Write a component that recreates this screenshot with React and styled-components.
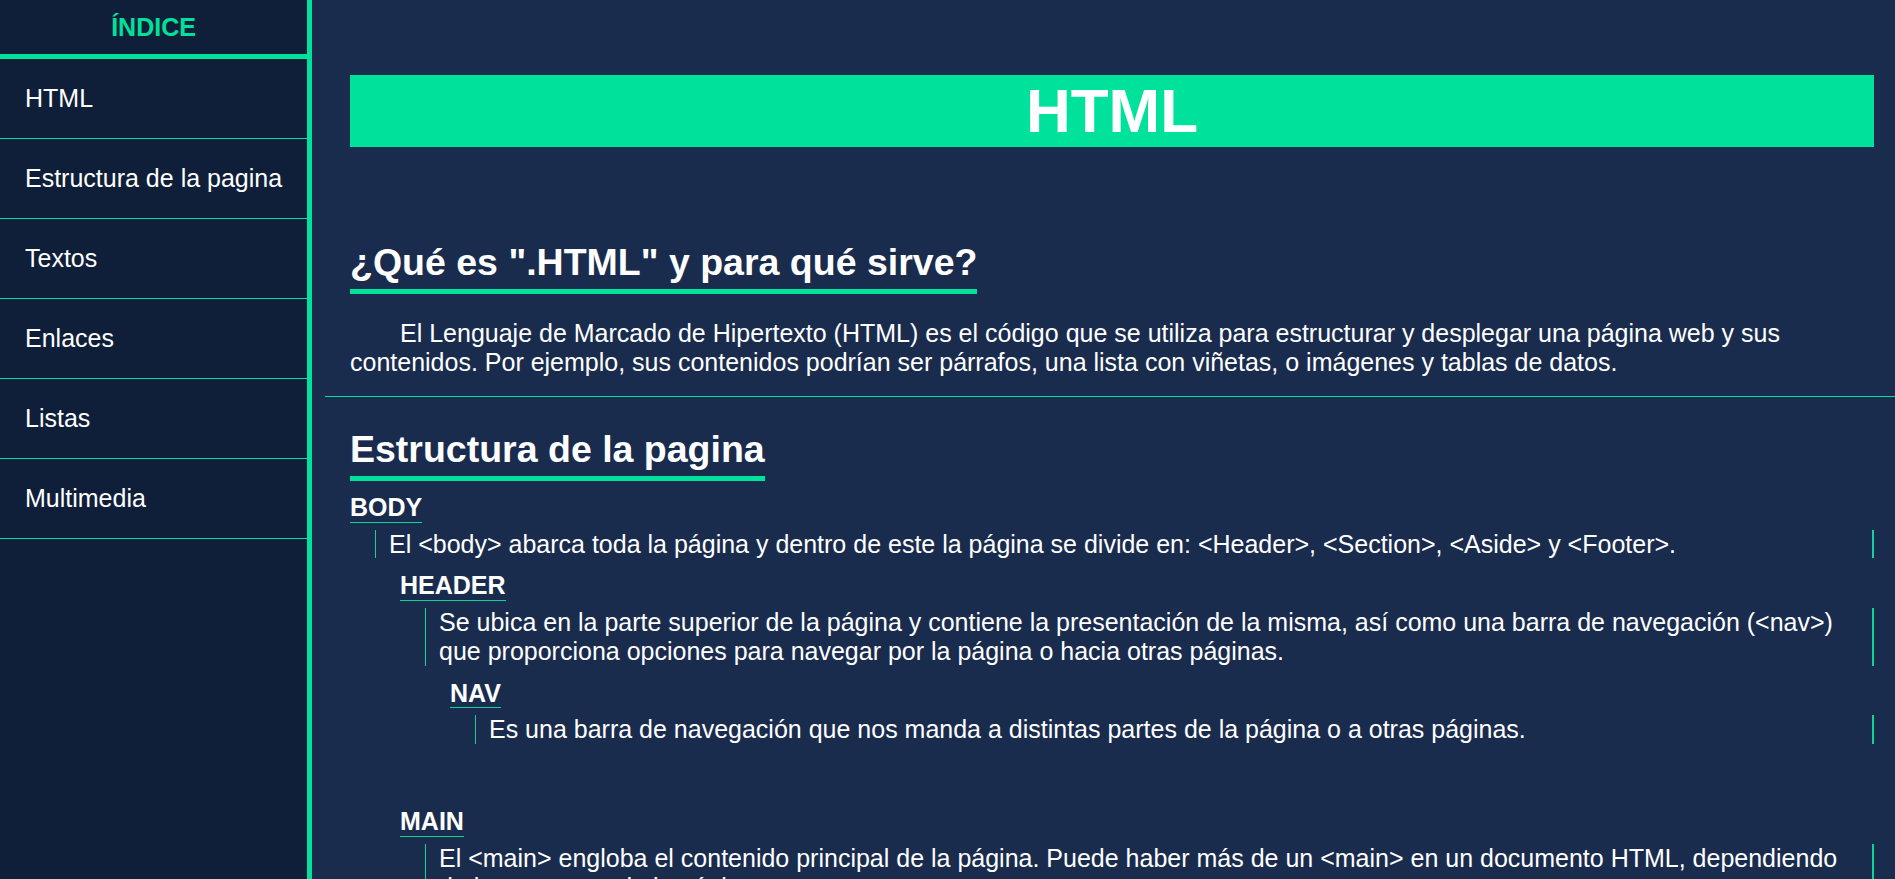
import React from 'react';
import styled, { createGlobalStyle } from 'styled-components';

const GlobalStyle = createGlobalStyle`
  html, body {
    margin: 0;
    padding: 0;
    height: 100%;
    overflow: hidden;
  }
  body {
    font-family: "Liberation Sans", Arial, sans-serif;
    color: #fff;
    background: #1a2c4e;
  }
  * {
    box-sizing: border-box;
  }
`;

const Layout = styled.div`
  display: flex;
  height: 100vh;
  overflow: hidden;
`;

const Sidebar = styled.aside`
  width: 312px;
  flex-shrink: 0;
  height: 100vh;
  background: #0f1f3a;
  border-right: 5px solid #00e29b;
`;

const SidebarTitle = styled.h2`
  margin: 0;
  height: 59px;
  display: flex;
  align-items: center;
  justify-content: center;
  font-size: 25px;
  font-weight: bold;
  color: #00e29b;
  border-bottom: 5px solid #00e29b;
`;

const Menu = styled.ul`
  list-style: none;
  margin: 0;
  padding: 0;
`;

const MenuItem = styled.li`
  height: 80px;
  display: flex;
  align-items: center;
  padding-left: 25px;
  font-size: 25px;
  line-height: 1.15;
  border-bottom: 1px solid #00e29b;
  a {
    color: #fff;
    text-decoration: none;
  }
`;

const Main = styled.main`
  flex: 1;
  height: 100vh;
  overflow-y: auto;
  scrollbar-width: none;
  padding-left: 13px;
  &::-webkit-scrollbar {
    display: none;
  }
`;

const BannerWrap = styled.header`
  padding: 75px 21px 0 25px;
  margin-bottom: 63px;
`;

const Banner = styled.h1`
  margin: 0;
  height: 72px;
  line-height: 72px;
  background: #00e29b;
  color: #fff;
  text-align: center;
  font-size: 62px;
  font-weight: bold;
`;

const Section = styled.section`
  padding: 31px 21px 19px 25px;
  border-bottom: ${(p) => (p.$last ? 'none' : '1px solid #00e29b')};
`;

const SectionTitle = styled.h2`
  margin: 0;
  width: fit-content;
  font-size: 37.5px;
  font-weight: bold;
  line-height: 1.15;
  padding-bottom: 5px;
  border-bottom: 5px solid #00e29b;
`;

const Text = styled.p`
  margin: 25px 0 0;
  font-size: 25px;
  line-height: 1.15;
  text-indent: 50px;
`;

const Entry = styled.div`
  display: flex;
  flex-direction: column;
  align-items: flex-start;
  margin-left: ${(p) => p.$indent || 0}px;
  margin-top: ${(p) => p.$top || 0}px;
  margin-bottom: ${(p) => p.$bottom || 0}px;
  align-self: stretch;
`;

const Term = styled.h3`
  margin: 0;
  font-size: 25px;
  font-weight: bold;
  line-height: 1.15;
  border-bottom: 1px solid #10d399;
`;

const Desc = styled.p`
  align-self: stretch;
  margin: 7px 0 13px 25px;
  padding: 0 13px;
  font-size: 25px;
  line-height: 1.15;
  border-left: 1px solid #10d399;
  border-right: 2px solid #10d399;
`;

const menu = ['HTML', 'Estructura de la pagina', 'Textos', 'Enlaces', 'Listas', 'Multimedia'];

export default function App() {
  return (
    <>
      <GlobalStyle />
      <Layout>
        <Sidebar>
          <SidebarTitle>ÍNDICE</SidebarTitle>
          <Menu>
            {menu.map((m) => (
              <MenuItem key={m}>
                <a href={'#' + m}>{m}</a>
              </MenuItem>
            ))}
          </Menu>
        </Sidebar>
        <Main>
          <BannerWrap>
            <Banner>HTML</Banner>
          </BannerWrap>
          <Section>
            <SectionTitle>¿Qué es ".HTML" y para qué sirve?</SectionTitle>
            <Text>
              El Lenguaje de Marcado de Hipertexto (HTML) es el código que se utiliza para estructurar y
              desplegar una página web y sus contenidos. Por ejemplo, sus contenidos podrían ser párrafos,
              una lista con viñetas, o imágenes y tablas de datos.
            </Text>
          </Section>
          <Section $last>
            <SectionTitle>Estructura de la pagina</SectionTitle>
            <Entry $top={12}>
              <Term>BODY</Term>
              <Desc>
                El &lt;body&gt; abarca toda la página y dentro de este la página se divide en: &lt;Header&gt;,
                &lt;Section&gt;, &lt;Aside&gt; y &lt;Footer&gt;.
              </Desc>
              <Entry $indent={50} $bottom={50}>
                <Term>HEADER</Term>
                <Desc>
                  Se ubica en la parte superior de la página y contiene la presentación de la misma, así como
                  una barra de navegación (&lt;nav&gt;) que proporciona opciones para navegar por la página o
                  hacia otras páginas.
                </Desc>
                <Entry $indent={50}>
                  <Term>NAV</Term>
                  <Desc>
                    Es una barra de navegación que nos manda a distintas partes de la página o a otras páginas.
                  </Desc>
                </Entry>
              </Entry>
              <Entry $indent={50}>
                <Term>MAIN</Term>
                <Desc>
                  El &lt;main&gt; engloba el contenido principal de la página. Puede haber más de un
                  &lt;main&gt; en un documento HTML, dependiendo de la estructura de la página.
                </Desc>
              </Entry>
              <Entry $indent={50}>
                <Term>FOOTER</Term>
                <Desc>
                  Se ubica en la parte inferior de la página y suele contener información de contacto,
                  derechos de autor y enlaces de interés.
                </Desc>
              </Entry>
            </Entry>
          </Section>
        </Main>
      </Layout>
    </>
  );
}
